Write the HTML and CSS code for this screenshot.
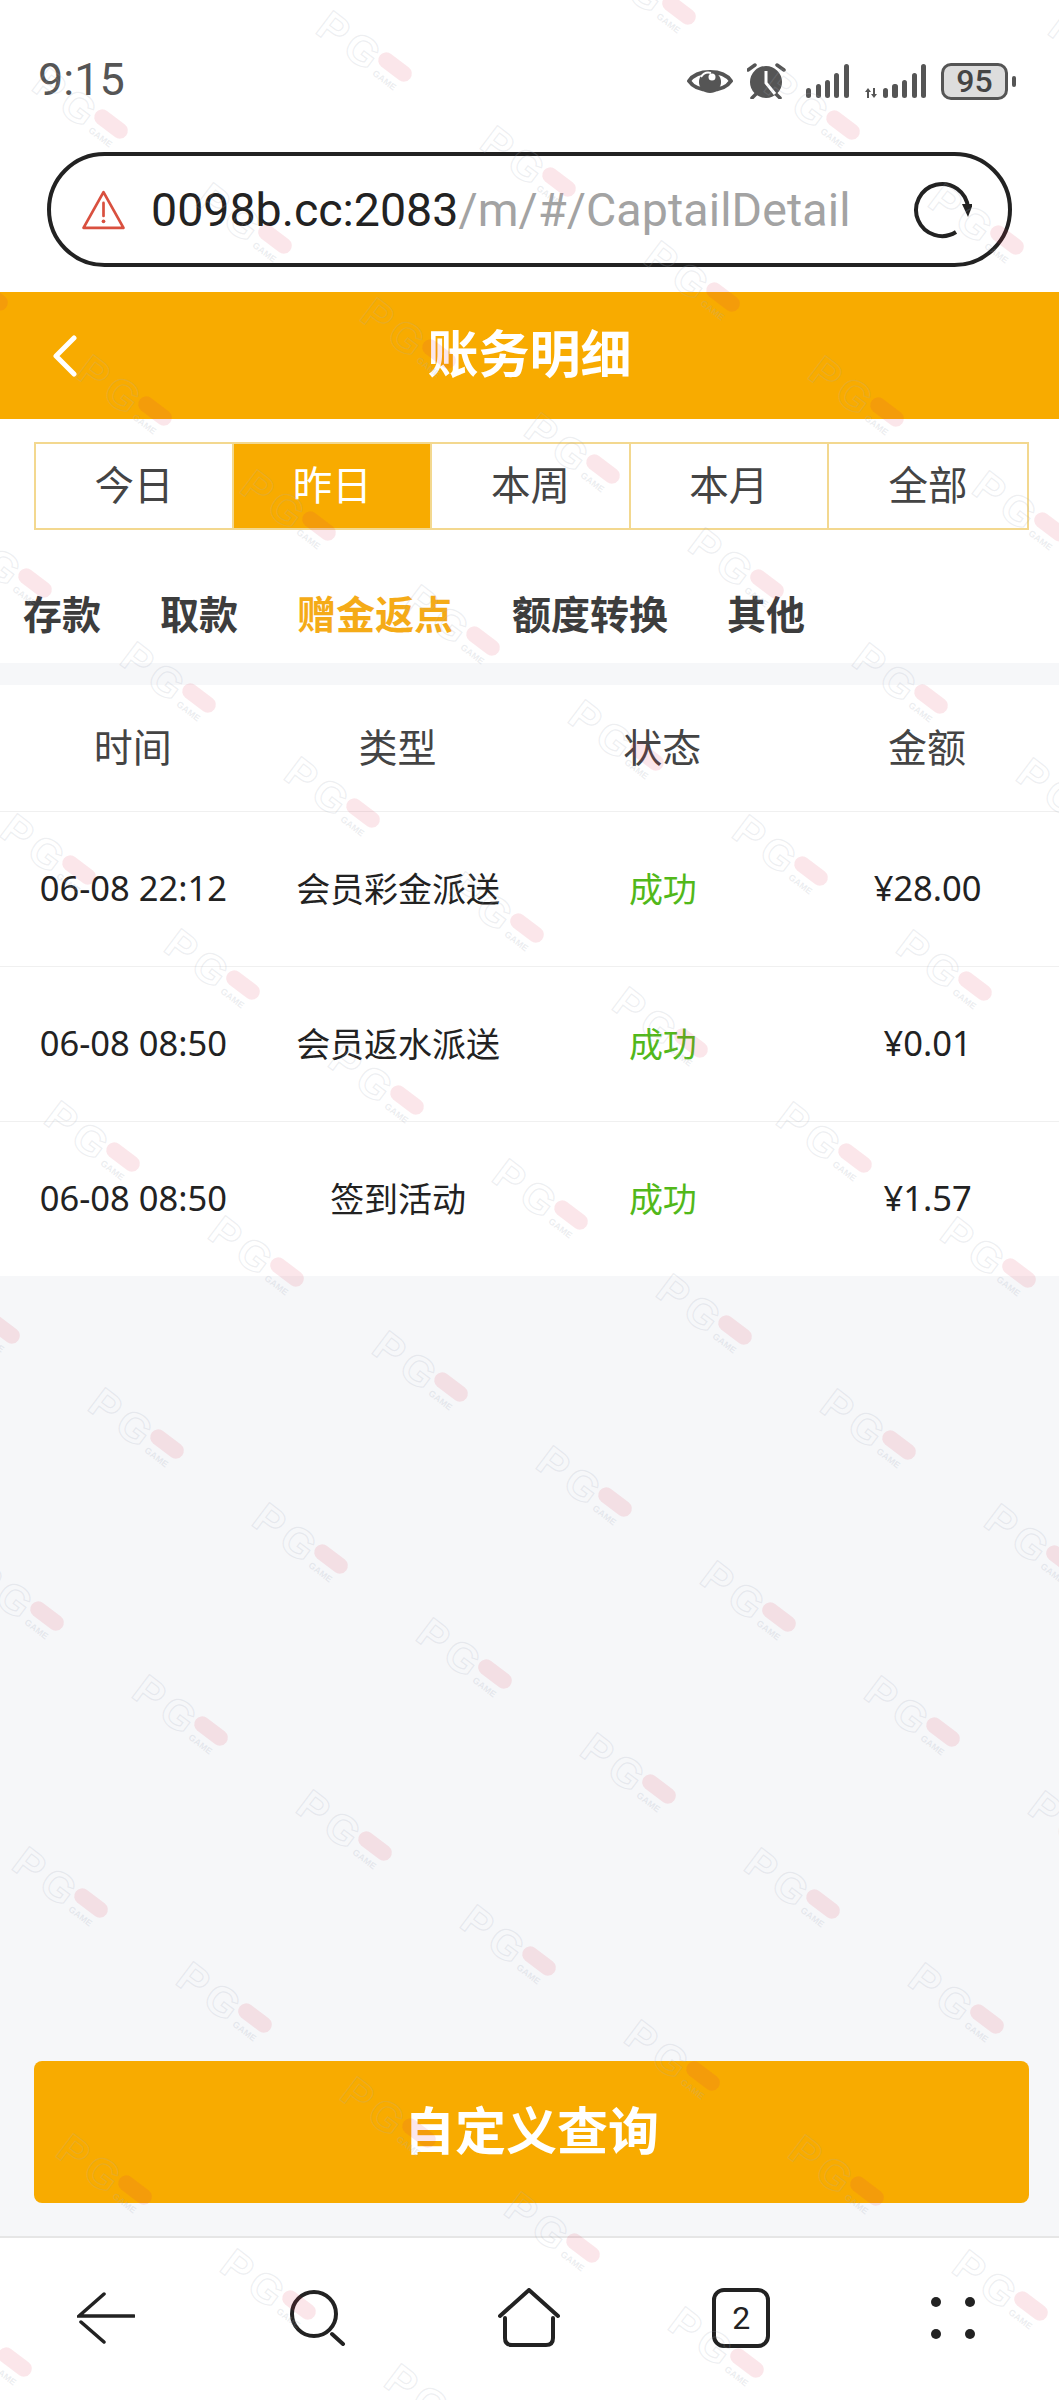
FILE: index.html
```html
<!DOCTYPE html>
<html>
<head>
  <title>账务明细</title>
  <link rel="stylesheet" href="styles.css">
</head>
<body>
  <div class="page">
    <div class="status">
      <span class="time">9:15</span>
      <div class="status-icons">
        <svg width="46" height="30" viewBox="0 0 46 30">
          <path d="M2 15C10 3 36 3 44 15C36 27 10 27 2 15Z" fill="none" stroke="#555" stroke-width="4" stroke-linejoin="round"/>
          <circle cx="23" cy="16" r="11" fill="#555"/>
          <path d="M14 11A9 9 0 0 1 24 7" fill="none" stroke="#fff" stroke-width="2"/>
          <circle cx="25" cy="11" r="3.5" fill="#fff"/>
        </svg>
        <svg width="45" height="36" viewBox="0 0 45 36">
          <circle cx="19" cy="19" r="16" fill="#555"/>
          <path d="M1 7L8 2M37 7L30 2M5 35L10 30M33 35L28 30" stroke="#555" stroke-width="3.5" stroke-linecap="round"/>
          <path d="M19 8V20L28 31" fill="none" stroke="#fff" stroke-width="3"/>
        </svg>
        <svg width="44" height="34" viewBox="0 0 44 34" fill="#555">
          <rect x="0" y="24" width="5" height="10" rx="2.5"/>
          <rect x="10" y="20" width="5" height="14" rx="2.5"/>
          <rect x="19" y="16" width="5" height="18" rx="2.5"/>
          <rect x="28" y="9" width="5" height="25" rx="2.5"/>
          <rect x="38" y="0" width="5" height="34" rx="2.5"/>
        </svg>
        <svg width="63" height="34" viewBox="0 0 63 34" fill="#555">
          <path d="M4 24L1 28H3V34H5V28H7ZM10 34L13 30H11V24H9V30H7Z"/>
          <rect x="19" y="24" width="5" height="10" rx="2.5"/>
          <rect x="28" y="20" width="6" height="14" rx="2.5"/>
          <rect x="38" y="16" width="5" height="18" rx="2.5"/>
          <rect x="48" y="9" width="5" height="25" rx="2.5"/>
          <rect x="57" y="0" width="5" height="34" rx="2.5"/>
        </svg>
        <div class="battery"><span class="battery-level">95</span><span class="battery-nub"></span></div>
      </div>
    </div>

    <div class="urlbar">
      <svg class="url-warn" width="45" height="40" viewBox="0 0 41 37">
        <path d="M20.5 2L39 35H2Z" fill="none" stroke="#d9503f" stroke-width="2.5" stroke-linejoin="round"/>
        <path d="M20.5 12V24" stroke="#d9503f" stroke-width="2.5" stroke-linecap="round"/>
        <circle cx="20.5" cy="29" r="1.7" fill="#d9503f"/>
      </svg>
      <span class="url-text">0098b.cc:2083<span class="url-path">/m/#/CaptailDetail</span></span>
      <svg class="url-reload" width="60" height="60" viewBox="0 0 60 60">
        <path d="M44 52A26 26 0 1 1 56 28" fill="none" stroke="#222" stroke-width="4"/>
        <path d="M50 24H61L56 37Z" fill="#222"/>
      </svg>
    </div>

    <div class="titlebar">
      <svg class="title-back" width="27" height="42" viewBox="0 0 27 42">
        <path d="M23 3L5 21L23 39" fill="none" stroke="#fff" stroke-width="5" stroke-linecap="round" stroke-linejoin="round"/>
      </svg>
      <h1 class="title">账务明细</h1>
    </div>

    <div class="top-panel">
      <div class="range-tabs">
        <div class="range-tab">今日</div>
        <div class="range-tab active">昨日</div>
        <div class="range-tab">本周</div>
        <div class="range-tab">本月</div>
        <div class="range-tab">全部</div>
      </div>
      <div class="cats">
        <span class="cat">存款</span>
        <span class="cat">取款</span>
        <span class="cat active">赠金返点</span>
        <span class="cat">额度转换</span>
        <span class="cat">其他</span>
      </div>
    </div>

    <main class="content">
      <table class="records">
        <thead>
          <tr>
            <th>时间</th>
            <th>类型</th>
            <th>状态</th>
            <th>金额</th>
          </tr>
        </thead>
        <tbody>
          <tr>
            <td class="num">06-08 22:12</td>
            <td>会员彩金派送</td>
            <td class="ok">成功</td>
            <td class="num">¥28.00</td>
          </tr>
          <tr>
            <td class="num">06-08 08:50</td>
            <td>会员返水派送</td>
            <td class="ok">成功</td>
            <td class="num">¥0.01</td>
          </tr>
          <tr>
            <td class="num">06-08 08:50</td>
            <td>签到活动</td>
            <td class="ok">成功</td>
            <td class="num">¥1.57</td>
          </tr>
        </tbody>
      </table>
      <button class="query-btn">自定义查询</button>
    </main>

    <nav class="bottom-nav">
      <svg width="58" height="52" viewBox="0 0 58 52" fill="none" stroke="#222" stroke-width="3.5" stroke-linecap="round">
        <path d="M27 2L2 24H57M4 30L27 50"/>
      </svg>
      <svg width="56" height="56" viewBox="0 0 56 56" fill="none" stroke="#222" stroke-width="4" stroke-linecap="round">
        <circle cx="24" cy="24" r="22"/>
        <path d="M42 44L53 54"/>
      </svg>
      <svg width="62" height="60" viewBox="0 0 62 60" fill="none" stroke="#222" stroke-width="4" stroke-linecap="round" stroke-linejoin="round">
        <path d="M2 28L31 2L60 28"/>
        <path d="M7 30V50Q7 57 14 57H48Q55 57 55 50V30"/>
      </svg>
      <div class="tab-count">2</div>
      <svg width="44" height="42" viewBox="0 0 44 42" fill="#222">
        <circle cx="5" cy="5" r="5"/>
        <circle cx="39" cy="5" r="5"/>
        <circle cx="5" cy="37" r="5"/>
        <circle cx="39" cy="37" r="5"/>
      </svg>
    </nav>

    <svg class="watermarks" id="watermarks" width="1059" height="2400" viewBox="0 0 1059 2400">
      <defs>
        <g id="mark">
          <text class="mark-letters" x="-86" y="21">P</text>
          <text class="mark-letters" x="-52" y="21">G</text>
          <rect class="mark-pill" x="-19" y="-8" width="38" height="16" rx="8"/>
          <text class="mark-small" x="-14" y="20">GAME</text>
        </g>
      </defs>
    </svg>
  </div>

  <script>
    // marca de agua: rejilla inclinada, anclada en una marca conocida
    var layer = document.getElementById('watermarks');
    for (var a = -8; a <= 8; a++) {
      for (var b = -14; b <= 10; b++) {
        var x = 451 + a * 284 + b * 164;
        var y = 1387 - a * 57 + b * 115;
        if (x < -60 || x > 1150 || y < -40 || y > 2460) continue;
        var use = document.createElementNS('http://www.w3.org/2000/svg', 'use');
        use.setAttribute('href', '#mark');
        use.setAttribute('transform', 'translate(' + x + ' ' + y + ') rotate(37)');
        layer.appendChild(use);
      }
    }
  </script>
</body>
</html>
```

FILE: styles.css
```css
* {
  box-sizing: border-box;
}
body {
  margin: 0;
  background-color: #ffffff;
  font-family: Roboto, "Noto Sans CJK SC", sans-serif;
}
.page {
  position: relative;
  display: flex;
  flex-direction: column;
  width: 1059px;
  height: 2400px;
  overflow: hidden;
}

/* barra de estado */
.status {
  display: flex;
  justify-content: space-between;
  align-items: flex-start;
  height: 152px;
  padding: 54px 51px 0 38px;
}
.time {
  font-size: 45px;
  line-height: 52px;
  color: #555555;
}
.status-icons {
  display: flex;
  align-items: center;
  gap: 14px;
  height: 38px;
  margin-top: 8px;
}
.battery {
  position: relative;
  width: 67px;
  height: 37px;
}
.battery-level {
  display: block;
  height: 37px;
  border: 3px solid #555555;
  border-radius: 10px;
  background-color: #dddddd;
  color: #444444;
  font-size: 32px;
  font-weight: 500;
  line-height: 31px;
  text-align: center;
}
.battery-nub {
  position: absolute;
  top: 13px;
  right: -8px;
  width: 4px;
  height: 11px;
  border-radius: 2px;
  background-color: #555555;
}

/* barra de direccion */
.urlbar {
  display: flex;
  align-items: center;
  height: 115px;
  margin: 0 47px 25px 47px;
  padding: 0 36px 0 30px;
  border: 4px solid #222222;
  border-radius: 58px;
}
.url-text {
  flex: 1;
  margin-left: 25px;
  font-size: 46.5px;
  color: #222222;
  white-space: nowrap;
}
.url-path {
  color: #a3a3a3;
  letter-spacing: 0.12px;
}

/* cabecera */
.titlebar {
  position: relative;
  display: flex;
  justify-content: center;
  align-items: center;
  height: 127px;
  background-color: #f8ab00;
}
.title-back {
  position: absolute;
  top: 43px;
  left: 51px;
}
.title {
  margin: 0;
  font-size: 51px;
  font-weight: 700;
  line-height: 120px;
  color: #ffffff;
}

.top-panel {
  padding-top: 23px;
  background-color: #ffffff;
}
.range-tabs {
  display: grid;
  grid-template-columns: repeat(5, 1fr);
  height: 88px;
  margin: 0 30px 0 34px;
  border: 2px solid #f3d88f;
}
.range-tab {
  display: flex;
  justify-content: center;
  align-items: center;
  padding-bottom: 8px;
  border-right: 2px solid #f3d88f;
  font-size: 39.5px;
  color: #444444;
}
.range-tab:last-child {
  border-right: none;
}
.range-tab.active {
  background-color: #f8ab00;
  color: #ffffff;
}
.cats {
  display: flex;
  align-items: center;
  gap: 59px;
  height: 133px;
  padding: 30px 0 0 23px;
}
.cat {
  font-size: 39px;
  font-weight: 700;
  color: #3d3d3d;
}
.cat.active {
  color: #f5ab17;
}

/* tabla */
.content {
  display: flex;
  flex-direction: column;
  flex: 1;
  padding-top: 22px;
  background-color: #f6f7f9;
}
.records {
  width: 100%;
  border-collapse: collapse;
  table-layout: fixed;
  background-color: #ffffff;
}
.records th {
  height: 126px;
  padding: 0 0 6px 1px;
  border-bottom: 1px solid #f0f0f0;
  font-size: 39px;
  font-weight: 400;
  color: #444444;
  text-align: center;
}
.records td {
  height: 155px;
  padding: 0 0 3px 2px;
  border-bottom: 1px solid #f0f0f0;
  font-size: 34px;
  color: #222222;
  text-align: center;
}
.records tr:last-child td {
  height: 155px;
  border-bottom: none;
}
.records td.num {
  font-family: "Noto Sans", "Noto Sans CJK SC", sans-serif;
  font-size: 34.5px;
}
.records td.ok {
  color: #52b81a;
}
.query-btn {
  width: 995px;
  height: 142px;
  margin: auto 0 33px 34px;
  padding: 0 0 8px;
  border: none;
  border-radius: 8px;
  background-color: #f8ab00;
  font-family: inherit;
  font-size: 51px;
  font-weight: 700;
  color: #ffffff;
}

/* navegacion inferior */
.bottom-nav {
  display: grid;
  grid-template-columns: repeat(5, 1fr);
  justify-items: center;
  align-items: center;
  height: 164px;
  padding: 0 0 2px;
  border-top: 2px solid #e6e6e6;
  background-color: #ffffff;
}
.tab-count {
  display: flex;
  justify-content: center;
  align-items: center;
  width: 58px;
  height: 60px;
  border: 4px solid #222222;
  border-radius: 12px;
  font-size: 32px;
  color: #222222;
}

/* marca de agua por encima de todo */
.watermarks {
  position: absolute;
  top: 0;
  left: 0;
  pointer-events: none;
}
.mark-letters {
  fill: none;
  stroke: rgba(165, 172, 185, 0.2);
  stroke-width: 1.2;
  font-family: "Liberation Sans", sans-serif;
  font-size: 42px;
  font-weight: 700;
}
.mark-pill {
  fill: rgba(226, 50, 80, 0.12);
}
.mark-small {
  fill: rgba(165, 172, 185, 0.22);
  font-family: "Liberation Sans", sans-serif;
  font-size: 9px;
  font-weight: 700;
}
```
